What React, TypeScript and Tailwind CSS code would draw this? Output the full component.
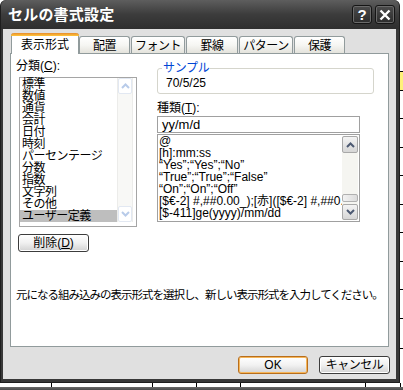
import React from "react";

function Chev({ up, color, w = 9 }: { up?: boolean; color: string; w?: number }) {
  return (
    <svg width={w} height="6" viewBox="0 0 9 6">
      <path
        d={up ? "M1 5 L4.5 1.5 L8 5" : "M1 1 L4.5 4.5 L8 1"}
        fill="none"
        stroke={color}
        strokeWidth="2"
      />
    </svg>
  );
}

const cats = [
  "標準",
  "数値",
  "通貨",
  "会計",
  "日付",
  "時刻",
  "パーセンテージ",
  "分数",
  "指数",
  "文字列",
  "その他",
  "ユーザー定義",
];

const fmts = [
  "@",
  "[h]:mm:ss",
  "\u201CYes\u201D;\u201CYes\u201D;\u201CNo\u201D",
  "\u201CTrue\u201D;\u201CTrue\u201D;\u201CFalse\u201D",
  "\u201COn\u201D;\u201COn\u201D;\u201COff\u201D",
  "[$€-2] #,##0.00_);[赤]([$€-2] #,##0.00)",
  "[$-411]ge(yyyy)/mm/dd",
];

const tabs = [
  { t: "配置", w: "w-[51px]", ml: "ml-0" },
  { t: "フォント", w: "w-[54px]", ml: "ml-[1px]" },
  { t: "罫線", w: "w-[52px]", ml: "ml-[1px]" },
  { t: "パターン", w: "w-[54px]", ml: "ml-[1px]" },
  { t: "保護", w: "w-[51px]", ml: "ml-[1px]" },
];

export default function App() {
  return (
    <div className="w-[403px] h-[390px] overflow-hidden bg-white flex flex-col font-['Liberation_Sans','Noto_Sans_CJK_JP',sans-serif] text-[12px] text-black">
      <div className="flex h-[383px]">
        {/* Dialog */}
        <div className="w-[400px] h-[383px] flex flex-col bg-[#383838] rounded-t-[6px] border-l border-r border-b border-[#1e1e1e]">
          {/* title bar */}
          <div className="h-[29px] shrink-0 flex items-center pl-[7px] pr-[4px] rounded-t-[6px] bg-gradient-to-b from-[#5e5e5e] via-[#3c3c3c] to-[#2e2e2e]">
            <div className="text-white font-bold text-[15px] leading-[16px] tracking-[0.2px]">
              セルの書式設定
            </div>
            <div className="ml-auto flex gap-[3px] self-start mt-[5px]">
              <div className="w-[20px] h-[19px] rounded-[3px] border border-[#151515] shadow-[inset_0_0_0_1px_#6a6a6a] bg-gradient-to-b from-[#4c4c4c] to-[#2c2c2c] flex items-center justify-center text-white font-bold text-[15px] leading-[15px]">
                ?
              </div>
              <div className="w-[20px] h-[19px] rounded-[3px] border border-[#151515] shadow-[inset_0_0_0_1px_#6a6a6a] bg-gradient-to-b from-[#4c4c4c] to-[#2c2c2c] flex items-center justify-center">
                <svg width="12" height="12" viewBox="0 0 12 12">
                  <path d="M1.5 1.5 L10.5 10.5 M10.5 1.5 L1.5 10.5" stroke="white" strokeWidth="2.4" />
                </svg>
              </div>
            </div>
          </div>

          {/* body */}
          <div className="flex-1 ml-[2px] mr-[3px] mb-[3px] bg-[#e0e0e0] flex flex-col pt-[4px] pl-[7px]">
            {/* tabs */}
            <div className="h-[20px] flex items-end pl-[1px]">
              <div className="relative z-10 -mb-px w-[68px] h-[21px] bg-white border-x border-[#919b9c] rounded-t-[3px] flex flex-col">
                <div className="h-[3px] rounded-t-[3px] bg-gradient-to-b from-[#e68b2c] to-[#ffc73c] -mx-px" />
                <div className="flex-1 flex items-center justify-center leading-[12px] pb-[1px]">表示形式</div>
              </div>
              {tabs.map((tb) => (
                <div
                  key={tb.t}
                  className={`${tb.w} ${tb.ml} h-[17px] border-x border-t border-[#919b9c] rounded-t-[3px] bg-gradient-to-b from-white via-[#f6f6f3] to-[#e4e3dc] flex items-center justify-center leading-[12px] pt-[2px] tracking-[-0.5px]`}
                >
                  {tb.t}
                </div>
              ))}
            </div>

            {/* panel */}
            <div className="w-[379px] h-[294px] border border-[#919b9c] bg-white flex flex-col pt-[6px] pl-[5px]">
              <div className="flex">
                {/* left col */}
                <div className="w-[141px] flex flex-col">
                  <div className="h-[12px] leading-[12px]">
                    分類(<span className="underline underline-offset-1">C</span>):
                  </div>
                  <div className="mt-[5px] ml-[3px] w-[118px] h-[150px] border border-[#a5a5a5] bg-white flex">
                    <div className="w-[97px] flex flex-col">
                      {cats.map((c, i) => (
                        <div
                          key={c}
                          className={`h-[12px] leading-[12px] pl-[2px] whitespace-nowrap tracking-[-0.5px] ${
                            i === 11 ? "bg-[#bebebe]" : ""
                          }`}
                        >
                          {c}
                        </div>
                      ))}
                    </div>
                    <div className="w-[16px] h-[144px] flex flex-col justify-between bg-[#f8f8f6] border-x border-[#ececea]">
                      <div className="h-[16px] rounded-[2px] border border-[#e2e8f2] bg-white flex items-center justify-center">
                        <Chev up color="#b8cbe9" />
                      </div>
                      <div className="h-[16px] rounded-[2px] border border-[#e2e8f2] bg-white flex items-center justify-center">
                        <Chev color="#b8cbe9" />
                      </div>
                    </div>
                  </div>
                  <div className="mt-[7px] ml-[2px] w-[71px] h-[18px] rounded-[3px] border border-[#3c3c3c] shadow-[inset_0_0_0_1px_#ffffff] bg-gradient-to-b from-white via-[#f0f0f0] to-[#d2d2d2] flex items-center justify-center leading-[12px]">
                    削除(<span className="underline underline-offset-1">D</span>)
                  </div>
                </div>

                {/* right col */}
                <div className="flex flex-col">
                  <fieldset className="mt-[2px] w-[217px] border border-[#d5d5cc] rounded-[3px] pl-[4px] pb-[4px]">
                    <legend className="px-[1px] text-[#0046d5] leading-[12px] tracking-[-0.3px]">サンプル</legend>
                    <div className="mt-[3px] pl-[4px] leading-[12px]">70/5/25</div>
                  </fieldset>
                  <div className="mt-[8px] h-[12px] leading-[12px]">
                    種類(<span className="underline underline-offset-1">T</span>):
                  </div>
                  <div className="mt-[2px] w-[203px] h-[17px] border border-[#a0a0a0] bg-white pl-[4px] text-[13px] leading-[15px]">
                    yy/m/d
                  </div>
                  <div className="mt-[1px] w-[203px] h-[88px] border border-[#a0a0a0] bg-white flex">
                    <div className="w-[184px] overflow-hidden flex flex-col pl-[1px]">
                      {fmts.map((f) => (
                        <div key={f} className="h-[12px] leading-[12px] whitespace-nowrap">
                          {f}
                        </div>
                      ))}
                    </div>
                    <div className="w-[16px] my-px flex flex-col bg-[#f5f5f1]">
                      <div className="h-[17px] rounded-[2px] border border-[#a8a8a8] bg-gradient-to-b from-[#f4f4f4] to-[#d6d6d6] flex items-center justify-center">
                        <Chev up color="#4d5a73" />
                      </div>
                      <div className="flex-1 flex flex-col justify-end pb-[2px]">
                        <div className="h-[8px] rounded-[2px] border border-[#b0b0b0] bg-gradient-to-r from-[#f2f2f2] to-[#dcdcdc]" />
                      </div>
                      <div className="h-[16px] rounded-[2px] border border-[#a8a8a8] bg-gradient-to-b from-[#f4f4f4] to-[#d6d6d6] flex items-center justify-center">
                        <Chev color="#4d5a73" />
                      </div>
                    </div>
                  </div>
                </div>
              </div>

              <div className="mt-[37px] leading-[13px] text-[11.5px] tracking-[-1px] whitespace-nowrap">
                元になる組み込みの表示形式を選択し、新しい表示形式を入力してください。
              </div>
            </div>

            {/* buttons */}
            <div className="mt-[9px] flex justify-end gap-[11px] pr-[6px]">
              <div className="w-[70px] h-[18px] rounded-[3px] border border-[#b86e1c] shadow-[inset_0_0_0_1px_#f6b65a] bg-gradient-to-b from-white via-[#f2f2f2] to-[#d4d4d4] flex items-center justify-center leading-[12px]">
                OK
              </div>
              <div className="w-[71px] h-[18px] rounded-[3px] border border-[#3c3c3c] shadow-[inset_0_0_0_1px_#ffffff] bg-gradient-to-b from-white via-[#f0f0f0] to-[#d2d2d2] flex items-center justify-center leading-[12px] tracking-[-0.5px]">
                キャンセル
              </div>
            </div>
          </div>
        </div>

        {/* spreadsheet sliver at right */}
        <div className="w-[3px] flex flex-col bg-white">
          <div className="h-[72px] border-b border-black" />
          <div className="h-[19px] bg-[#fff27a] border-b border-black" />
          <div className="h-[28px] border-b border-black" />
          <div className="h-[29px] border-b border-black" />
          <div className="h-[28px] border-b border-black" />
          <div className="h-[29px] border-b border-black" />
          <div className="h-[28px] border-b border-black" />
          <div className="h-[29px] border-b border-black" />
          <div className="h-[28px] border-b border-black" />
          <div className="h-[29px] border-b border-black" />
          <div className="h-[30px] border-b border-black" />
          <div className="flex-1" />
        </div>
      </div>

      {/* spreadsheet strip under the dialog */}
      <div className="h-[4px] flex bg-white">
        <div className="w-[52px] border-r border-black" />
        <div className="w-[101px] border-r border-black" />
        <div className="w-[44px] border-r border-black" />
        <div className="w-[44px] border-r border-black" />
        <div className="w-[125px] border-r border-black" />
        <div className="w-[35px] border-r border-black" />
      </div>
      <div className="flex-1 bg-gradient-to-b from-[#6a6a6a] to-[#4a4a4a]" />
    </div>
  );
}
